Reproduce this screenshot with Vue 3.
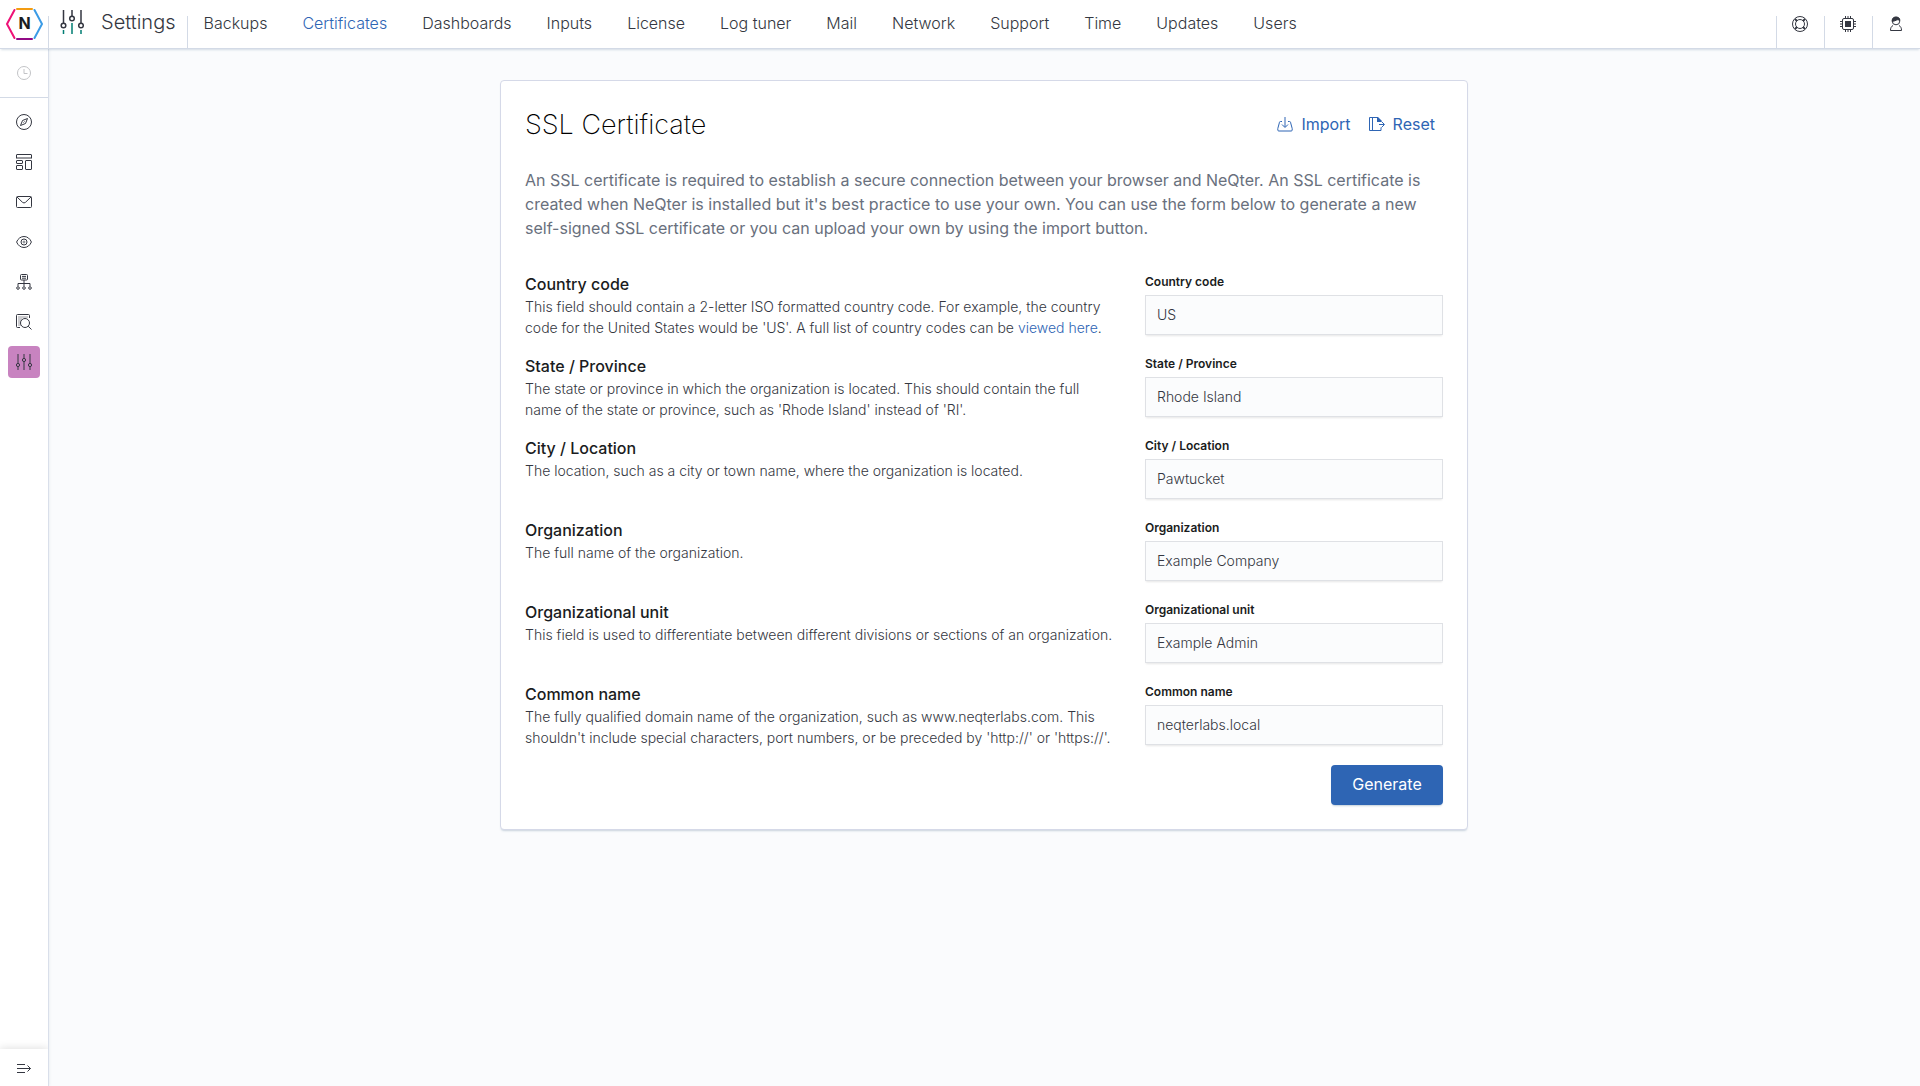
<script setup>
import { reactive } from 'vue'

const tabs = [
  'Backups', 'Certificates', 'Dashboards', 'Inputs', 'License', 'Log tuner', 'Mail',
  'Network', 'Support', 'Time', 'Updates', 'Users',
]
const activeTab = 'Certificates'

const fields = reactive([
  {
    id: 'country',
    label: 'Country code',
    help: "This field should contain a 2-letter ISO formatted country code. For example, the country code for the United States would be 'US'. A full list of country codes can be ",
    link: 'viewed here',
    value: 'US',
  },
  {
    id: 'state',
    label: 'State / Province',
    help: "The state or province in which the organization is located. This should contain the full name of the state or province, such as 'Rhode Island' instead of 'RI'.",
    value: 'Rhode Island',
  },
  {
    id: 'city',
    label: 'City / Location',
    help: 'The location, such as a city or town name, where the organization is located.',
    value: 'Pawtucket',
  },
  {
    id: 'organization',
    label: 'Organization',
    help: 'The full name of the organization.',
    value: 'Example Company',
  },
  {
    id: 'unit',
    label: 'Organizational unit',
    help: 'This field is used to differentiate between different divisions or sections of an organization.',
    value: 'Example Admin',
  },
  {
    id: 'common-name',
    label: 'Common name',
    help: "The fully qualified domain name of the organization, such as www.neqterlabs.com. This shouldn't include special characters, port numbers, or be preceded by 'http://' or 'https://'.",
    value: 'neqterlabs.local',
  },
])
</script>

<template>
  <div class="app">
    <header class="topbar">
      <a class="logo" href="#" aria-label="Home">
        <svg width="38" height="34" viewBox="0 0 38 34" fill="none" stroke-width="2" stroke-linecap="round">
          <path d="M12 2H27" stroke="#f39c12" />
          <path d="M12 32H27" stroke="#920a86" />
          <path d="M9.500 3L2 17L9.500 31" stroke="#ee1177" />
          <path d="M29.500 3L37 17L29.500 31" stroke="#3a9be6" />
          <text x="19.500" y="22" text-anchor="middle" class="logo-letter">N</text>
        </svg>
      </a>
      <div class="section">
        <svg width="24" height="24" viewBox="0 0 24 24" fill="none" stroke="#343741" stroke-width="1.500">
          <path d="M3.500 0V13M12 0V6M21 0V13" />
          <circle cx="3.500" cy="15.500" r="2.300" />
          <circle cx="12" cy="8.500" r="2.300" />
          <circle cx="21" cy="15.500" r="2.300" />
          <path d="M3.500 20V24M12 13V24M21 20V24" stroke="#017d73" />
        </svg>
        <span>Settings</span>
      </div>
      <nav class="tabs">
        <a v-for="tab in tabs" :key="tab" href="#" :class="{ active: tab === activeTab }">{{ tab }}</a>
      </nav>
      <div class="tools">
        <button type="button" aria-label="Help">
          <svg width="16" height="16" viewBox="0 0 16 16" fill="none" stroke="#343741">
            <circle cx="8" cy="8" r="7.500" />
            <circle cx="8" cy="8" r="4.500" />
            <path stroke-width="1.800" d="M3 3L5 5M13 3L11 5M3 13L5 11M13 13L11 11" />
          </svg>
        </button>
        <button type="button" aria-label="System">
          <svg width="16" height="16" viewBox="0 0 16 16" fill="none" stroke="#343741">
            <rect x="2.500" y="2.500" width="11" height="11" rx="1.500" />
            <rect x="5" y="5" width="6" height="6" fill="#343741" stroke="none" />
            <path d="M5.500 0V2M8 0V2M10.500 0V2M5.500 14V16M8 14V16M10.500 14V16M0 5.500H2M0 8H2M0 10.500H2M14 5.500H16M14 8H16M14 10.500H16" />
          </svg>
        </button>
        <button type="button" aria-label="Account">
          <svg width="16" height="16" viewBox="0 0 16 16" fill="none" stroke="#343741">
            <circle cx="8" cy="5" r="3.800" />
            <path d="M4.200 5.300C4 2.600 5.600 1 8 1s4 1.600 3.800 3.500C10 3.500 9.300 3.600 8 4.300S5.500 5.200 4.200 5.300z" fill="#343741" />
            <path d="M5 9.500C3.200 10.500 2.500 12 2.500 14.500h11C13.500 12 12.800 10.500 11 9.500" />
          </svg>
        </button>
      </div>
    </header>

    <div class="body">
      <aside class="sidebar">
        <button type="button" class="recent" aria-label="Recently viewed">
          <svg width="14" height="14" viewBox="0 0 14 14" fill="none" stroke="#c2c3c6">
            <circle cx="7" cy="7" r="6.500" />
            <path d="M7 3V7.500H10.500" />
          </svg>
        </button>
        <nav class="side-nav">
          <a href="#" aria-label="Discover">
            <svg width="16" height="16" viewBox="0 0 16 16" fill="none" stroke="#343741">
              <circle cx="8" cy="8" r="7.500" />
              <path d="M11.500 4.500L9.500 9.500L4.500 11.500L6.500 6.500z" stroke-linejoin="round" />
              <path d="M7.500 8.500L8.500 7.500" />
            </svg>
          </a>
          <a href="#" aria-label="Dashboards">
            <svg width="16" height="16" viewBox="0 0 16 16" fill="none" stroke="#343741">
              <rect x=".5" y=".5" width="15" height="4" rx=".5" />
              <path d="M1 4H15" stroke="#9a9ba0" stroke-width="2" />
              <rect x=".5" y="6.500" width="6" height="3" rx=".5" />
              <rect x=".5" y="11.500" width="6" height="4" rx=".5" />
              <rect x="9.500" y="6.500" width="6" height="9" rx=".5" />
            </svg>
          </a>
          <a href="#" aria-label="Mail">
            <svg width="16" height="16" viewBox="0 0 16 16" fill="none" stroke="#343741">
              <rect x=".5" y="2.500" width="15" height="11" rx="1" />
              <path d="M1 3L6.500 8.300a2.200 2.200 0 003 0L15 3" />
            </svg>
          </a>
          <a href="#" aria-label="Watch">
            <svg width="16" height="16" viewBox="0 0 16 16" fill="none" stroke="#343741">
              <path d="M.6 8C2 4.500 4.800 2.500 8 2.500S14 4.500 15.400 8C14 11.500 11.200 13.500 8 13.500S2 11.500.6 8z" />
              <circle cx="8" cy="8" r="3" />
              <circle cx="8" cy="8" r="1" stroke-width=".6" />
            </svg>
          </a>
          <a href="#" aria-label="Topology">
            <svg width="16" height="16" viewBox="0 0 16 16" fill="none" stroke="#343741">
              <rect x="4.500" y=".5" width="7" height="5.500" rx="1" />
              <path d="M6 2.400H10M6 4.200H10M8 6V12M2 12V9.500H14V12" />
              <circle cx="2" cy="14" r="1.300" />
              <circle cx="8" cy="14" r="1.300" />
              <circle cx="14" cy="14" r="1.300" />
            </svg>
          </a>
          <a href="#" aria-label="Search logs">
            <svg width="16" height="16" viewBox="0 0 16 16" fill="none" stroke="#343741">
              <path d="M4 13.500H1.500a1 1 0 01-1-1V1.500a1 1 0 011-1h11a1 1 0 011 1V4" />
              <path d="M2.500 3H12M2.500 5H6M2.500 7H5M2.500 9H5M2.500 11H5" stroke-dasharray="1 1" />
              <circle cx="9" cy="9" r="4.500" />
              <path d="M12.200 12.200L15.500 15.500" />
            </svg>
          </a>
          <a href="#" class="current" aria-label="Settings">
            <svg width="16" height="16" viewBox="0 0 16 16" fill="none" stroke="#343741">
              <path d="M2 0V9M8 0V4M14 0V9M2 13V16M8 8V16M14 13V16" />
              <circle cx="2" cy="11" r="1.600" />
              <circle cx="8" cy="6" r="1.600" />
              <circle cx="14" cy="11" r="1.600" />
            </svg>
          </a>
        </nav>
        <button type="button" class="expand" aria-label="Expand navigation">
          <svg width="16" height="16" viewBox="0 0 16 16" fill="none" stroke="#343741">
            <path d="M1 4.500H9M1 8.500H14.500M1 12.500H9M11.500 5.500L14.500 8.500L11.500 11.500" />
          </svg>
        </button>
      </aside>

      <main class="content">
        <form class="card" @submit.prevent>
          <div class="card-head">
            <h1>SSL Certificate</h1>
            <div class="actions">
              <button type="button">
                <svg width="16" height="16" viewBox="0 0 16 16" fill="none" stroke="#2e65b4">
                  <path d="M5 5.500H3.500C2.500 5.500 2.500 6 2.300 7L.8 12.500V14a1 1 0 001 1h12.400a1 1 0 001-1V12.500L13.700 7C13.500 6 13.500 5.500 12.500 5.500H11" />
                  <path d="M8 1V11M5 8.500L8 11.500L11 8.500" />
                </svg>
                <span>Import</span>
              </button>
              <button type="button">
                <svg width="16" height="16" viewBox="0 0 16 16" fill="none" stroke="#2e65b4">
                  <path d="M12 11.500V14.500H.5V1.500H8.500M3.500 1.500V14.500M10 8.500H15M12.500 5.500L15.500 8.500L12.500 11.500" />
                  <path d="M8 1H9L12.500 4.500V6H8z" fill="#2e65b4" stroke="none" />
                </svg>
                <span>Reset</span>
              </button>
            </div>
          </div>

          <p class="intro">
            An SSL certificate is required to establish a secure connection between your browser and NeQter. An SSL
            certificate is created when NeQter is installed but it's best practice to use your own. You can use the form
            below to generate a new self-signed SSL certificate or you can upload your own by using the import button.
          </p>

          <div class="rows">
            <div v-for="field in fields" :key="field.id" class="row">
              <div class="about">
                <h2>{{ field.label }}</h2>
                <p>{{ field.help }}<template v-if="field.link"><a href="#">{{ field.link }}</a>.</template></p>
              </div>
              <div class="field">
                <label :for="field.id">{{ field.label }}</label>
                <input :id="field.id" v-model="field.value" type="text" />
              </div>
            </div>
          </div>

          <div class="submit">
            <button type="submit">Generate</button>
          </div>
        </form>
      </main>
    </div>
  </div>
</template>

<style>
body {
  margin: 0;
  background: #fafbfd;
}
</style>

<style scoped>
.app {
  display: flex;
  flex-direction: column;
  min-height: 100vh;
  font-family: Inter, "Liberation Sans", sans-serif;
  color: #343741;
}

.app *,
.app {
  box-sizing: border-box;
}

a {
  color: #2e65b4;
  text-decoration: none;
}

button,
input {
  font: inherit;
  margin: 0;
}

button {
  border: 0;
  background: none;
  padding: 0;
  cursor: pointer;
}

svg {
  flex: none;
  display: block;
}

.topbar {
  position: relative;
  z-index: 2;
  display: flex;
  height: 49px;
  background: #fff;
  border-bottom: 1px solid #d3dae6;
  box-shadow: 0 2px 2px -1px rgba(54, 97, 126, 0.2);
}

.logo {
  display: flex;
  align-items: center;
  width: 48px;
  padding-left: 5px;
}

.logo-letter {
  font-size: 16px;
  font-weight: 700;
  fill: #1a1c21;
}

.section {
  display: flex;
  align-items: center;
  gap: 17px;
  padding: 0 12px 4px;
  font-size: 20px;
  line-height: 24px;
  font-weight: 300;
  background:
    linear-gradient(#d3dae6, #d3dae6) 0 100% / 1px 32px no-repeat,
    linear-gradient(#d3dae6, #d3dae6) 100% 100% / 1px 32px no-repeat;
}

.tabs {
  display: flex;
  align-items: center;
  gap: 35px;
  padding: 0 16px 2px;
  font-size: 16px;
  font-weight: 300;
  white-space: nowrap;
}

.tabs a {
  color: #343741;
}

.tabs a.active {
  color: #2e65b4;
}

.tools {
  display: flex;
  align-items: flex-end;
  margin-left: auto;
}

.tools button {
  display: flex;
  justify-content: center;
  width: 48px;
  height: 32px;
  padding-right: 1px;
  border-left: 1px solid #d3dae6;
}

.body {
  flex: 1;
  display: flex;
}

.sidebar {
  position: relative;
  z-index: 1;
  display: flex;
  flex-direction: column;
  width: 48px;
  background: #fff;
  box-shadow: 1px 0 0 #d9dfea, 1px 0 3px rgba(54, 97, 126, 0.12);
}

.recent {
  display: flex;
  align-items: center;
  justify-content: center;
  height: 49px;
  padding-right: 1px;
  border-bottom: 1px solid #d3dae6;
}

.side-nav {
  display: flex;
  flex-direction: column;
  align-items: center;
  gap: 8px;
  padding-top: 8px;
}

.side-nav a {
  display: flex;
  align-items: center;
  justify-content: center;
  width: 32px;
  height: 32px;
  border-radius: 4px;
}

.side-nav a.current {
  background: #c883c0;
}

.expand {
  display: flex;
  align-items: center;
  justify-content: center;
  height: 37px;
  margin-top: auto;
  box-shadow: 0 -1px 8px rgba(0, 0, 0, 0.12);
  clip-path: inset(-12px 0 0 0);
}

.content {
  flex: 1;
  padding: 31px 32px;
}

.card {
  max-width: 968px;
  margin: 0 auto;
  padding: 24px;
  background: #fff;
  border: 1px solid #d5d9e8;
  border-radius: 4px;
  box-shadow: 0 2px 2px -1px rgba(54, 97, 126, 0.25);
}

.card-head {
  display: flex;
  align-items: center;
  justify-content: space-between;
}

h1 {
  margin: 0;
  font-size: 27px;
  line-height: 40px;
  font-weight: 200;
  color: #000;
}

.actions {
  display: flex;
  gap: 2px;
  padding-bottom: 2px;
}

.actions button {
  display: flex;
  align-items: center;
  gap: 8px;
  padding: 0 8px;
  font-size: 16px;
  line-height: 24px;
  color: #2e65b4;
}

.intro {
  margin: 23px 0 32px;
  font-size: 16px;
  line-height: 24px;
  color: #69707d;
}

.rows {
  display: flex;
  flex-direction: column;
  gap: 16px;
}

.row {
  display: grid;
  grid-template-columns: 2fr 1fr;
  gap: 24px;
}

.about h2 {
  margin: 0;
  font-size: 16px;
  line-height: 24px;
  font-weight: 500;
  color: #1a1c21;
}

.about p {
  margin: 0;
  padding-right: 6px;
  font-size: 14px;
  line-height: 21px;
  font-weight: 300;
}

.field {
  display: flex;
  flex-direction: column;
  gap: 4px;
  padding: 1px 0 3px;
}

.field label {
  font-size: 12px;
  line-height: 18px;
  font-weight: 600;
  color: #1a1c21;
}

.field input {
  width: 100%;
  height: 40px;
  padding: 0 11px 1px;
  font-size: 14px;
  font-weight: 300;
  color: #343741;
  background: #fbfcfd;
  border: 1px solid #dfe1e5;
  border-radius: 0;
  box-shadow: 0 2px 2px -1px rgba(0, 0, 0, 0.1);
}

.submit {
  display: flex;
  justify-content: flex-end;
  margin-top: 17px;
}

.submit button {
  min-width: 112px;
  height: 40px;
  padding-bottom: 2px;
  font-size: 16px;
  color: #fff;
  background: #2e65b4;
  border-radius: 4px;
  box-shadow: 0 2px 2px -1px rgba(54, 97, 126, 0.3);
}
</style>
